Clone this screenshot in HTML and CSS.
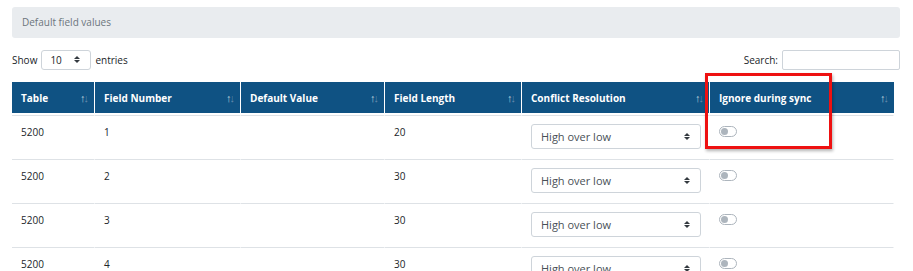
FILE: index.html
```html
<!DOCTYPE html>
<html>
    <head>
        <meta charset="utf-8">
        <title>Default field values</title>
        <link rel="stylesheet" href="styles.css">
    </head>
    <body>
        <div class="card-head">Default field values</div>
        <div class="tools">
            <label class="length">Show
                <span class="select small">10</span>
                entries</label>
            <label class="search">Search: <input type="text"></label>
        </div>
        <table class="grid">
            <thead>
                <tr>
                    <th class="c1">Table<span class="sort"><b>↑</b>↓</span></th>
                    <th class="c2">Field Number<span class="sort"><b>↑</b>↓</span></th>
                    <th class="c3">Default Value<span class="sort"><b>↑</b>↓</span></th>
                    <th class="c4">Field Length<span class="sort"><b>↑</b>↓</span></th>
                    <th class="c5">Conflict Resolution<span class="sort"><b>↑</b>↓</span></th>
                    <th class="c6">Ignore during sync<span class="sort"><b>↑</b>↓</span></th>
                </tr>
            </thead>
            <tbody>
                <tr>
                    <td>5200</td><td>1</td><td></td><td>20</td>
                    <td><span class="select">High over low</span></td>
                    <td class="hl"><span class="switch"></span><div class="mark"></div></td>
                </tr>
                <tr>
                    <td>5200</td><td>2</td><td></td><td>30</td>
                    <td><span class="select">High over low</span></td>
                    <td><span class="switch"></span></td>
                </tr>
                <tr>
                    <td>5200</td><td>3</td><td></td><td>30</td>
                    <td><span class="select">High over low</span></td>
                    <td><span class="switch"></span></td>
                </tr>
                <tr>
                    <td>5200</td><td>4</td><td></td><td>30</td>
                    <td><span class="select">High over low</span></td>
                    <td><span class="switch"></span></td>
                </tr>
            </tbody>
        </table>
    </body>
</html>
```

FILE: styles.css
```css
body{
    margin: 0;
    padding: 7px 13px 0 12px;
    font-family: "Open Sans", "Noto Sans", sans-serif;
    font-size: 10px;
    color: #212529;
    overflow: hidden;
}
.card-head{
    background: #e9ecef;
    border-radius: 3px;
    height: 31px;
    line-height: 31px;
    padding-left: 10px;
    color: #6c757d;
}
.tools{
    display: flex;
    justify-content: space-between;
    align-items: center;
    margin-top: 12px;
    height: 20px;
}
.length{
    display: flex;
    align-items: center;
    gap: 4px;
}
.search{
    display: flex;
    align-items: center;
    gap: 4px;
}
.search input{
    width: 116px;
    height: 18px;
    border: 1px solid #ced4da;
    border-radius: 2px;
    padding: 0;
    margin: 0;
}
.select{
    position: relative;
    display: block;
    width: 159px;
    height: 23px;
    line-height: 23px;
    padding-left: 9px;
    border: 1px solid #ced4da;
    border-radius: 3px;
    color: #495057;
    font-size: 11px;
}
.select::after{
    content: "";
    position: absolute;
    right: 10px;
    top: 8px;
    width: 0;
    height: 0;
    border-left: 3px solid transparent;
    border-right: 3px solid transparent;
    border-bottom: 3px solid #343a40;
}
.select::before{
    content: "";
    position: absolute;
    right: 10px;
    top: 12px;
    width: 0;
    height: 0;
    border-left: 3px solid transparent;
    border-right: 3px solid transparent;
    border-top: 3px solid #343a40;
}
.select.small{
    width: 40px;
    height: 18px;
    line-height: 18px;
    padding-left: 8px;
    font-size: 10px;
    color: #212529;
}
.select.small::after{
    top: 5px;
}
.select.small::before{
    top: 9px;
}
.grid{
    margin-top: 12px;
    border-collapse: separate;
    border-spacing: 0;
    width: 882px;
    table-layout: fixed;
}
.grid th{
    background: #0f5283;
    color: white;
    text-align: left;
    font-weight: bold;
    height: 33px;
    padding: 0 9px;
    border-right: 1px solid white;
    position: relative;
    box-sizing: border-box;
}
.grid th:last-child{
    border-right: 0;
}
.sort{
    position: absolute;
    right: 7px;
    top: 8px;
    font-size: 11px;
    font-weight: bold;
    color: rgba(255,255,255,0.35);
    letter-spacing: -2px;
}
.sort b{
    color: rgba(255,255,255,0.7);
}
.c1{ width: 83px; }
.c2{ width: 146px; }
.c3{ width: 144px; }
.c4{ width: 137px; }
.c5{ width: 188px; }
.grid td{
    vertical-align: top;
    padding: 8px 9px 9px;
    line-height: 17px;
    height: 26px;
    border-top: 1px solid #dee2e6;
    border-right: 1px solid white;
}
.grid tbody tr:first-child td{
    border-top: 1px solid #dee2e6;
    box-shadow: inset 0 1px 0 white;
}
.grid thead th{
    border-bottom: 2px solid white;
}
.hl{
    position: relative;
}
.switch{
    display: block;
    position: relative;
    width: 16px;
    height: 9px;
    margin-top: 2px;
    border: 1px solid #adb5bd;
    border-radius: 6px;
}
.switch::after{
    content: "";
    position: absolute;
    left: 1px;
    top: 1px;
    width: 7px;
    height: 7px;
    border-radius: 50%;
    background: #adb5bd;
}
.mark{
    position: absolute;
    left: -5px;
    top: -43px;
    width: 121px;
    height: 70px;
    border: 3px solid #ee1111;
    box-shadow: 1px 2px 3px rgba(0,0,0,0.3);
}
```
